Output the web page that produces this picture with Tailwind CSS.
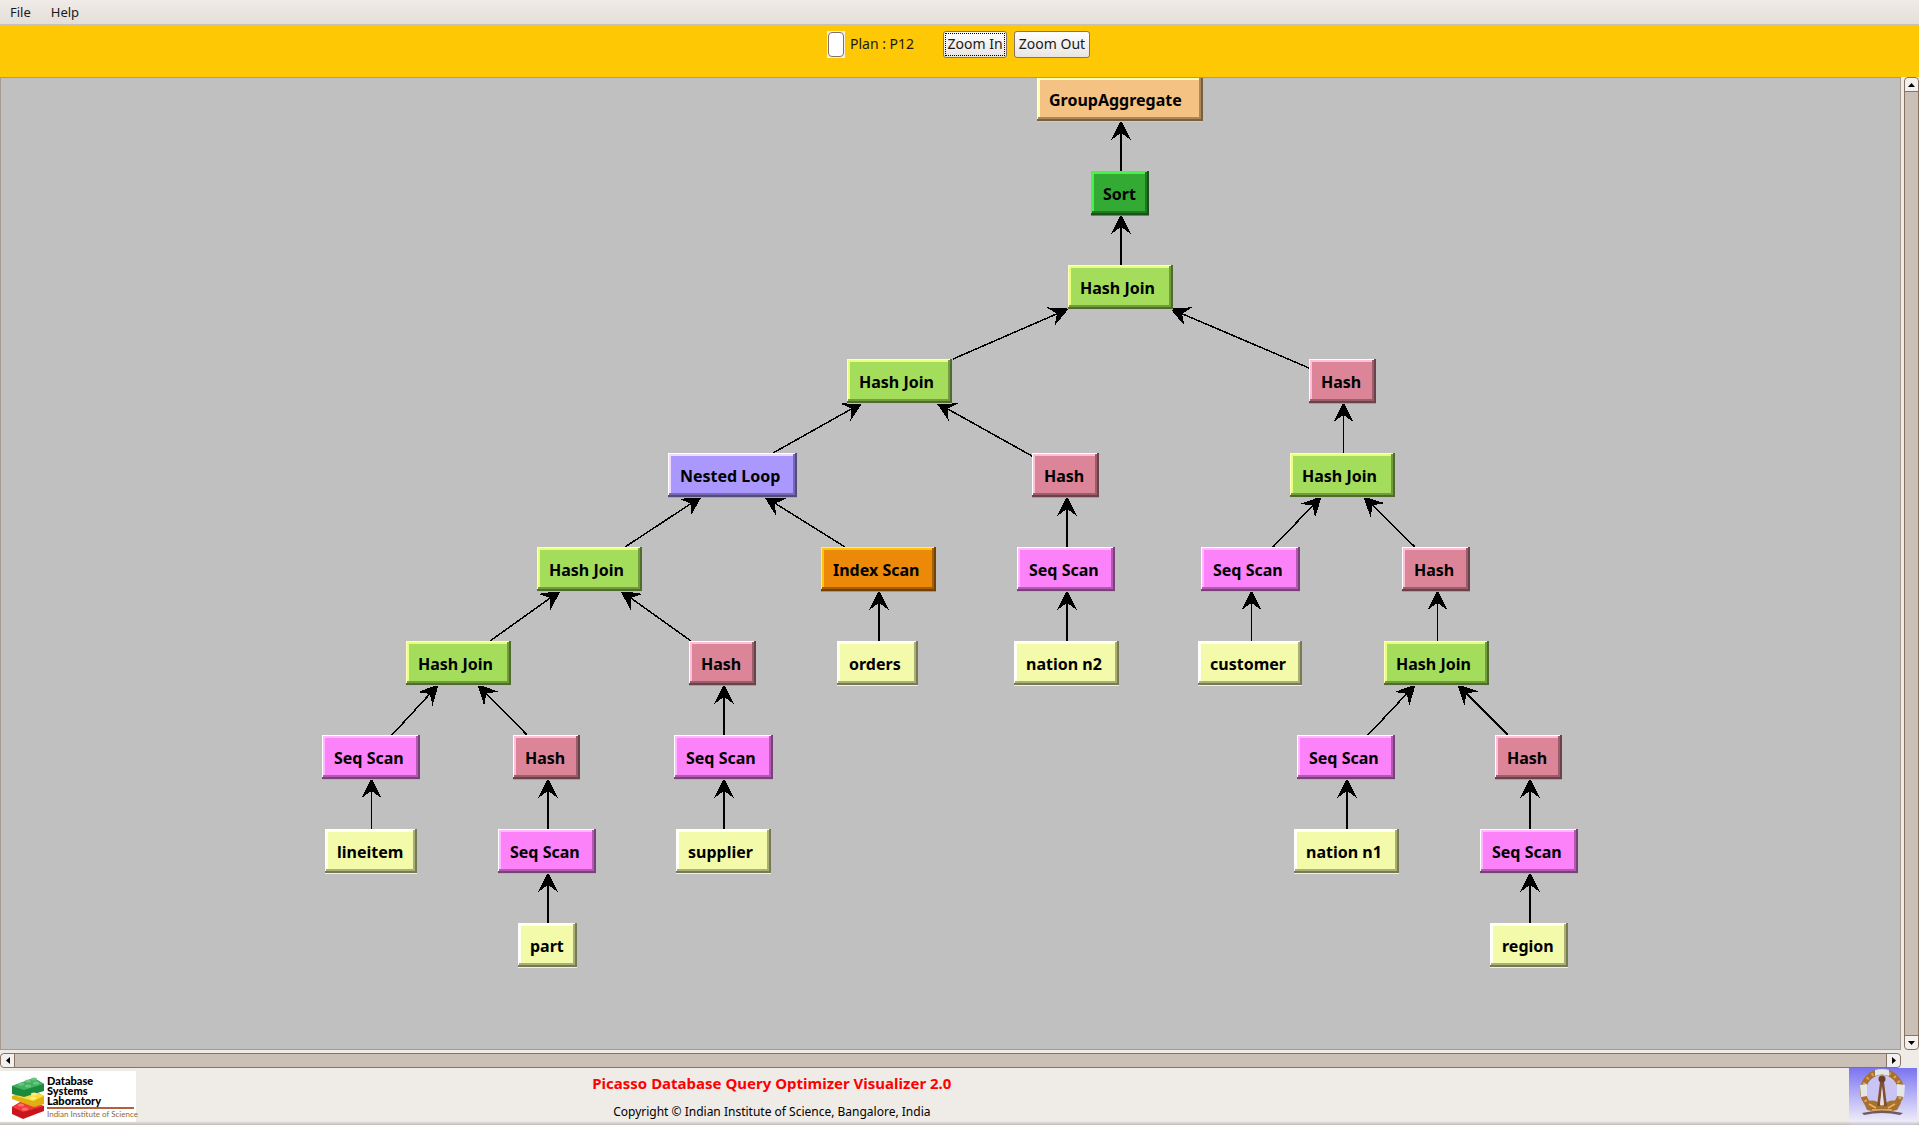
<!DOCTYPE html>
<html lang="en">
<head>
<meta charset="utf-8">
<title>Picasso Plan Tree</title>
<script src="https://cdn.jsdelivr.net/npm/@tailwindcss/browser@4"></script>
</head>
<body class="flex h-screen flex-col overflow-hidden bg-[#efebe7] font-['Noto_Sans',sans-serif] text-sm text-[#1a1a1a]">
<nav class="flex h-[25px] shrink-0 items-center gap-5 border-b border-[#c8c0b8] bg-linear-to-b from-[#efebe7] to-[#e4dfd8] px-[10px] text-[13px] leading-6">
  <a href="#file">File</a>
  <a href="#help">Help</a>
</nav>
<header class="flex h-[52px] shrink-0 items-start justify-center bg-[#ffc805] pt-[6px] text-[14px] leading-[26px]">
  <span class="flex h-[27px] w-[18px] bg-[#f5f0e6]"><input aria-label="Plan colour" class="m-px w-4 rounded-sm border border-[#857366] bg-white"></span>
  <span class="ml-[5px] w-[93px] whitespace-nowrap">Plan : P12</span>
  <button class="h-[27px] w-16 rounded-[3px] border border-[#857366] bg-linear-to-b from-white to-[#e9e5e1] p-0.5"><span class="-m-px flex h-[23px] items-center justify-center whitespace-nowrap border border-dotted border-black pb-0.5">Zoom In</span></button>
  <button class="ml-[7px] mr-0.5 flex h-[27px] w-19 items-center justify-center whitespace-nowrap rounded-[3px] border border-[#857366] bg-linear-to-b from-white to-[#e9e5e1] pb-0.5">Zoom Out</button>
</header>
<main class="grid min-h-0 flex-1 grid-cols-[minmax(0,1fr)_15px] grid-rows-[minmax(0,1fr)_15px] gap-[3px]">
  <section id="tree" aria-label="Plan tree" class="relative overflow-hidden border border-[#a89a8e] bg-[#c0c0c0]">
    <svg class="absolute left-0 top-0 h-[900px] w-[1900px]" stroke="#000" stroke-width="1.5" shape-rendering="crispEdges">
      <defs><marker id="head" markerUnits="userSpaceOnUse" markerWidth="24" markerHeight="24" refX="19" refY="11" orient="auto"><path d="M20 11L0 1L7 11L0 21Z" stroke="none"/></marker></defs>
      <g id="edges" marker-end="url(#head)"></g>
    </svg>
  </section>
  <div class="flex flex-col rounded-sm border border-[#857366] bg-[#cbc0b6]">
    <button aria-label="Scroll up" class="flex h-[14px] items-center justify-center rounded-t-sm border-b border-[#857366] bg-[#f3f0ed]"><svg width="7" height="4"><path d="M0 4L3.500 0L7 4Z"/></svg></button>
    <div class="flex-1"></div>
    <button aria-label="Scroll down" class="flex h-[14px] items-center justify-center rounded-b-sm border-t border-[#857366] bg-[#f3f0ed]"><svg width="7" height="4"><path d="M0 0L3.500 4L7 0Z"/></svg></button>
  </div>
  <div class="flex rounded-sm border border-[#857366] bg-[#cbc0b6]">
    <button aria-label="Scroll left" class="flex w-[14px] items-center justify-center rounded-l-sm border-r border-[#857366] bg-[#f3f0ed]"><svg width="4" height="7"><path d="M4 0L0 3.500L4 7Z"/></svg></button>
    <div class="flex-1"></div>
    <button aria-label="Scroll right" class="flex w-[14px] items-center justify-center rounded-r-sm border-l border-[#857366] bg-[#f3f0ed]"><svg width="4" height="7"><path d="M0 0L4 3.500L0 7Z"/></svg></button>
  </div>
</main>
<footer class="flex h-[57px] shrink-0 items-start">
  <div class="mt-[3px] flex h-[51px] w-[136px] shrink-0 bg-white pl-3">
    <svg class="mt-[5px] h-[43px] w-8 shrink-0" viewBox="0 0 32 43">
      <path d="M0 31L10 25L32 30V35L11 43L0 38Z" fill="#c9141d"/><path d="M0 31L10 25L32 30L11 36Z" fill="#ef3b3b"/>
      <path d="M0 20L21 14L32 20V28L22 31L0 23Z" fill="#e0b010"/><path d="M4 20L21 15L32 20L21 25Z" fill="#fbdc3c"/>
      <path d="M0 10L22 2L32 8V15L12 21L0 18Z" fill="#1c8a3e"/><path d="M0 10L22 2L32 8L12 14Z" fill="#43b162"/>
      <g fill="#68c882"><ellipse cx="9" cy="8" rx="3" ry="1.500"/><ellipse cx="16" cy="5" rx="3" ry="1.500"/><ellipse cx="22" cy="3" rx="3" ry="1.500"/><ellipse cx="16" cy="10" rx="3" ry="1.500"/><ellipse cx="24" cy="7" rx="3" ry="1.500"/></g>
      <g fill="#ff7068"><ellipse cx="9" cy="29" rx="3" ry="1.500"/><ellipse cx="13" cy="33" rx="3" ry="1.500"/></g>
      <g fill="#ffee80"><ellipse cx="22" cy="18" rx="3" ry="1.500"/><ellipse cx="21" cy="22" rx="3" ry="1.500"/></g>
    </svg>
    <div class="ml-[3px] mt-[5px] font-['Lato',sans-serif] text-[11px] font-black leading-[10px] text-black">
      <p>Database</p><p>Systems</p><p>Laboratory</p>
      <p class="mt-px w-[87px] whitespace-nowrap border-t-2 border-[#b5603c] text-[8px] font-normal leading-[10px] text-[#8a6a3c]">Indian Institute of Science</p>
    </div>
  </div>
  <div class="flex flex-1 flex-col items-center pr-[23%] leading-5 text-black">
    <p class="mt-[5px] text-[15px] font-bold text-[#ff0000]">Picasso Database Query Optimizer Visualizer 2.0</p>
    <p class="mt-[9px] text-[12px]">Copyright © Indian Institute of Science, Bangalore, India</p>
  </div>
  <svg class="mr-0.5 h-[57px] w-[68px] shrink-0" viewBox="0 0 68 57" role="img" aria-label="Institute emblem">
    <defs><linearGradient id="sky" x2="0" y2="1"><stop stop-color="#7a74f0"/><stop offset=".45" stop-color="#b3aff5"/><stop offset="1" stop-color="#f6f3fa"/></linearGradient></defs>
    <rect width="68" height="57" fill="url(#sky)"/>
    <circle cx="33" cy="23" r="19" fill="#c9c4f4" stroke="#a8702c" stroke-width="6"/>
    <circle cx="33" cy="23" r="19" fill="none" stroke="#d9a55c" stroke-width="3" stroke-dasharray="2 4"/>
    <path d="M26 2Q33 0 40 2V8Q33 5 26 8ZM11 17L18 16L18 28L12 29ZM48 16L56 17L55 29L48 28Z" fill="#e2e6e4"/>
    <path d="M15 35Q25 29 33 38Q42 29 52 35L48 42Q33 46 18 42Z" fill="#a8712a"/>
    <path d="M20 36L27 40M46 36L39 40M23 42H43" stroke="#e3b469" stroke-width="1.500"/>
    <path d="M31 14L28 38H31L33 20L35 38H38L35 14Z" fill="#805032"/><path d="M33 18L31 37H35Z" fill="#eadfe0"/><circle cx="33" cy="11" r="3.500" fill="#6d4028"/>
    <path d="M13 45Q33 40 54 45L51 47Q33 43 15 47Z" fill="#6d5a64"/>
  </svg>
</footer>
<div class="pointer-events-none fixed inset-x-0 bottom-0 h-1 bg-linear-to-b from-transparent to-black/20"></div>
<script>
const base = "absolute flex h-[45px] items-center whitespace-nowrap pl-3 text-[16px] font-bold leading-6 text-black shadow-[inset_0_-1px_var(--c),inset_-2px_-3px_var(--d2),inset_1px_1px_var(--l1),inset_-4px_-5px_var(--d1),inset_3px_3px_var(--l2)] bg-(--c)";
const kinds = {
  group: "[--c:#f4c282] [--l1:#ffffff] [--l2:#ffffb9] [--d1:#aa875b] [--d2:#775f40]",
  sort: "[--c:#33aa33] [--l1:#48f248] [--l2:#48f248] [--d1:#237723] [--d2:#195319]",
  join: "[--c:#a4dd5b] [--l1:#ffffba] [--l2:#eaff82] [--d1:#729a3f] [--d2:#506c2c]",
  hash: "[--c:#dc8598] [--l1:#ffffff] [--l2:#ffbed9] [--d1:#9a5d6a] [--d2:#6c414a]",
  loop: "[--c:#ab98ff] [--l1:#ffffff] [--l2:#f4d9ff] [--d1:#776ab2] [--d2:#534a7d]",
  index: "[--c:#ec8908] [--l1:#ffff10] [--l2:#ffc40b] [--d1:#a55f05] [--d2:#734203]",
  seq: "[--c:#fc82fa] [--l1:#ffffff] [--l2:#ffb9ff] [--d1:#b05baf] [--d2:#7b3f7a]",
  table: "[--c:#f3faaa] [--l1:#ffffff] [--l2:#fffff2] [--d1:#aaaf77] [--d2:#777a53]"
};
// kind, label, x, row, width
const nodes = [
  ["group","GroupAggregate",1036,0,166],["sort","Sort",1090,1,58],["join","Hash Join",1067,2,105],
  ["join","Hash Join",846,3,105],["hash","Hash",1308,3,67],
  ["loop","Nested Loop",667,4,129],["hash","Hash",1031,4,67],["join","Hash Join",1289,4,105],
  ["join","Hash Join",536,5,105],["index","Index Scan",820,5,115],["seq","Seq Scan",1016,5,98],["seq","Seq Scan",1200,5,99],["hash","Hash",1401,5,68],
  ["join","Hash Join",405,6,105],["hash","Hash",688,6,67],["table","orders",836,6,81],["table","nation n2",1013,6,105],["table","customer",1197,6,104],["join","Hash Join",1383,6,105],
  ["seq","Seq Scan",321,7,98],["hash","Hash",512,7,67],["seq","Seq Scan",673,7,99],["seq","Seq Scan",1296,7,98],["hash","Hash",1494,7,67],
  ["table","lineitem",324,8,92],["seq","Seq Scan",497,8,98],["table","supplier",675,8,95],["table","nation n1",1293,8,105],["seq","Seq Scan",1479,8,98],
  ["table","part",517,9,59],["table","region",1489,9,78]
];
const tree = document.getElementById("tree");
for (const [kind, label, x, row, w] of nodes) {
  const el = document.createElement("div");
  el.className = base + " " + kinds[kind];
  el.style.left = x + "px";
  el.style.top = row * 94 - 1 + "px";
  el.style.width = w + "px";
  el.textContent = label;
  tree.append(el);
}
// x1, y1, x2, y2, stroke width
const edges = [
  [952,281,1067,231],[1308,290,1170,231],[772,375,861,325],[1031,378,936,325],[624,469,700,419],[844,469,764,419],
  [1272,469,1320,419],[1414,469,1363,419],[489,563,559,513],[690,563,620,513],[391,657,437,607],[526,657,477,607],
  [1367,657,1414,607],[1507,657,1457,607]
];
// vertical arrows: x, parent row, stroke width
for (const [x, row, w] of [[1120,0,2],[1120,1,2],[1342.5,3,1],[1066,4,2],[878,5,2],[1066,5,2],[1250.5,5,1],[1436.5,5,1],
  [723,6,2],[370.5,7,1],[547,7,2],[723,7,2],[1346,7,2],[1529,7,2],[547,8,2],[1529,8,2]])
  edges.push([x, row * 94 + 94, x, row * 94 + 43, w]);
for (const [x1, y1, x2, y2, w] of edges) {
  const p = document.createElementNS("http://www.w3.org/2000/svg", "path");
  const len = Math.hypot(x2 - x1, y2 - y1);
  p.setAttribute("d", `M${x1} ${y1}L${x2} ${y2}`);
  p.setAttribute("stroke-dasharray", `${len - 10} ${len}`);
  if (w) p.setAttribute("stroke-width", w);
  document.getElementById("edges").append(p);
}
</script>
</body>
</html>
